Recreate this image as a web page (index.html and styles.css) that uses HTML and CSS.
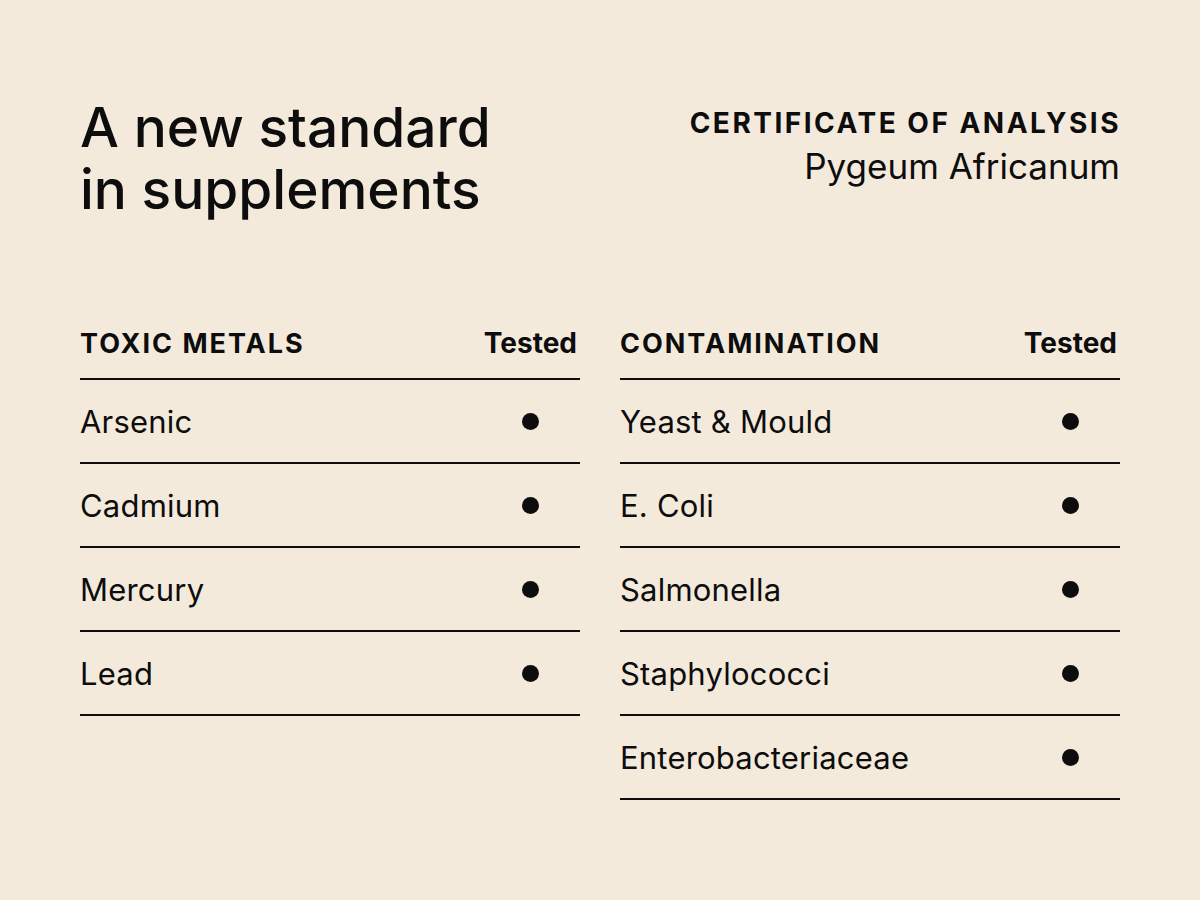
FILE: index.html
```html
<!DOCTYPE html>
<html lang="en">
<head>
<meta charset="utf-8">
<title>Certificate of Analysis</title>
<link rel="stylesheet" href="styles.css">
</head>
<body>
<main class="page">
  <header class="top">
    <h1 class="title">A new standard<br>in supplements</h1>
    <div class="cert">
      <div class="cert-label">CERTIFICATE OF ANALYSIS</div>
      <div class="cert-name">Pygeum Africanum</div>
    </div>
  </header>
  <section class="tables">
    <div class="table">
      <div class="row head"><span class="label">TOXIC METALS</span><span class="status">Tested</span></div>
      <div class="row"><span class="name">Arsenic</span><span class="dot"></span></div>
      <div class="row"><span class="name">Cadmium</span><span class="dot"></span></div>
      <div class="row"><span class="name">Mercury</span><span class="dot"></span></div>
      <div class="row"><span class="name">Lead</span><span class="dot"></span></div>
    </div>
    <div class="table">
      <div class="row head"><span class="label">CONTAMINATION</span><span class="status">Tested</span></div>
      <div class="row"><span class="name">Yeast &amp; Mould</span><span class="dot"></span></div>
      <div class="row"><span class="name">E. Coli</span><span class="dot"></span></div>
      <div class="row"><span class="name">Salmonella</span><span class="dot"></span></div>
      <div class="row"><span class="name">Staphylococci</span><span class="dot"></span></div>
      <div class="row"><span class="name">Enterobacteriaceae</span><span class="dot"></span></div>
    </div>
  </section>
</main>
</body>
</html>
```

FILE: styles.css
```css
html, body {
  margin: 0;
  padding: 0;
}
body {
  background: #f4eadc;
  color: #0d0d0d;
  font-family: "Inter", "Open Sans", sans-serif;
  width: 1200px;
  height: 900px;
  overflow: hidden;
}
.page {
  padding: 96px 80px 0 80px;
}
.top {
  display: flex;
  justify-content: space-between;
  align-items: flex-start;
}
.title {
  margin: 0;
  font-size: 55px;
  line-height: 62px;
  font-weight: 500;
  letter-spacing: 0;
}
.cert {
  text-align: right;
  padding-top: 10px;
}
.cert-label {
  font-size: 28px;
  font-weight: 700;
  letter-spacing: 2.5px;
  line-height: 34px;
  margin-right: -1px;
}
.cert-name {
  font-size: 35px;
  line-height: 52px;
  font-weight: 400;
}
.tables {
  display: grid;
  grid-template-columns: 1fr 1fr;
  column-gap: 40px;
  margin-top: 84px;
  align-items: start;
}
.row {
  display: grid;
  grid-template-columns: 1fr 100px;
  align-items: center;
  height: 82px;
  border-bottom: 2px solid #0d0d0d;
}
.row.head {
  height: 74px;
}
.label {
  font-size: 27px;
  font-weight: 700;
  letter-spacing: 2px;
  padding-top: 4px;
}
.status {
  font-size: 28px;
  font-weight: 700;
  text-align: right;
  padding-right: 3px;
  padding-top: 4px;
}
.name {
  font-size: 31px;
  font-weight: 400;
  letter-spacing: 0.2px;
}
.dot {
  justify-self: center;
  width: 17px;
  height: 17px;
  border-radius: 50%;
  background: #0d0d0d;
  margin-top: 1px;
}
```
